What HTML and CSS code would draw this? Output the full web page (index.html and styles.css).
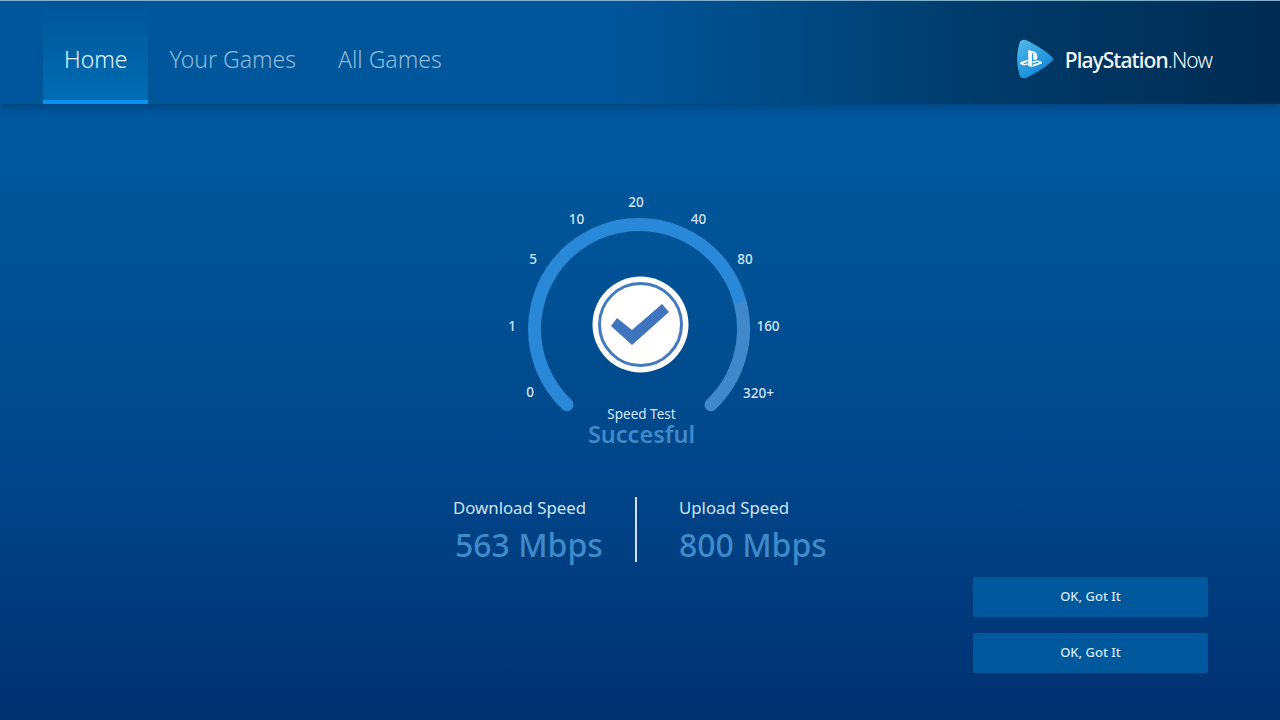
FILE: index.html
```html
<!DOCTYPE html>
<html lang="en">
<head>
<meta charset="utf-8">
<title>PlayStation Now</title>
<link rel="stylesheet" href="styles.css">
</head>
<body>
<div class="page">
  <header class="topbar">
    <nav class="nav">
      <a class="tab active">Home</a>
      <a class="tab">Your Games</a>
      <a class="tab">All Games</a>
    </nav>
    <div class="brand">
      <svg class="brand-icon" viewBox="0 0 38 40" width="38" height="40">
        <defs>
          <linearGradient id="playfill" x1="0" y1="0" x2="0.6" y2="1">
            <stop offset="0" stop-color="#55b9ea"/>
            <stop offset="1" stop-color="#0f88d8"/>
          </linearGradient>
        </defs>
        <path d="M3 6C3.500 1 7 -.5 11 1.500C20 6 30 12 36 18C37.500 19.500 37.500 20.500 36 22C30 28 20 34 11 38.500C7 40.500 3.500 39 3 34C.5 25 .5 15 3 6Z" fill="url(#playfill)"/>
        <g transform="translate(4 8.500) scale(.92)">
          <path fill="#fff" d="M8.985 2.596v17.548l3.915 1.261V6.688c0-.69.304-1.151.794-.991.636.181.76.814.76 1.505v5.876c2.441 1.193 4.362-.002 4.362-3.153 0-3.237-1.126-4.675-4.438-5.827-1.307-.448-3.728-1.186-5.391-1.502zm4.656 16.242l6.296-2.275c.715-.258.826-.625.246-.818-.586-.192-1.637-.139-2.357.123l-4.205 1.499v-2.385l.24-.085s1.201-.42 2.913-.615c1.696-.18 3.785.03 5.437.661 1.848.601 2.04 1.472 1.576 2.072-.465.6-1.622 1.036-1.622 1.036l-8.544 3.107V18.838zM1.807 18.600c-1.900-.545-2.214-1.668-1.352-2.320.801-.586 2.160-1.052 2.160-1.052l5.615-2.013v2.313L4.205 17c-.705.271-.825.632-.239.826.586.195 1.637.15 2.343-.12L8.247 17v2.074c-.12.03-.256.044-.39.073-1.939.331-3.996.196-6.038-.479z"/>
        </g>
      </svg>
      <span class="brand-name">PlayStation<span class="brand-dot">.</span><span class="brand-now">Now</span></span>
    </div>
  </header>
  <main class="content">
    <svg class="gauge" viewBox="0 0 300 280" width="300" height="280">
      <path class="arc-end" d="M250 122A104.500 104.500 0 0 1 221 224.700"/>
      <path class="arc-main" d="M77 224.700A104.500 104.500 0 1 1 250 122"/>
      <circle class="arc-cap" cx="77" cy="224.700" r="6.500"/>
      <g class="ticks">
        <text x="40" y="217">0</text>
        <text x="22" y="151">1</text>
        <text x="43" y="84">5</text>
        <text x="86.500" y="44">10</text>
        <text x="146" y="27">20</text>
        <text x="208.500" y="44">40</text>
        <text x="255" y="84">80</text>
        <text x="278" y="151">160</text>
        <text x="268.500" y="218">320+</text>
      </g>
      <circle cx="150.500" cy="144.500" r="48" fill="#fff"/>
      <circle cx="150.500" cy="144.500" r="41" class="ring"/>
      <path class="check" d="M127 138L142 150L172 124L179 132L142 165L121 146Z"/>
      <text class="speed-title" x="151.500" y="238.500">Speed Test</text>
      <text class="speed-result" x="151.500" y="263">Succesful</text>
    </svg>
    <section class="stats">
      <div class="stat stat-down">
        <div class="stat-label">Download Speed</div>
        <div class="stat-value">563 Mbps</div>
      </div>
      <div class="stat stat-up">
        <div class="stat-label">Upload Speed</div>
        <div class="stat-value">800 Mbps</div>
      </div>
    </section>
    <div class="actions">
      <button class="action">OK, Got It</button>
      <button class="action">OK, Got It</button>
    </div>
  </main>
</div>
</body>
</html>
```
FILE: styles.css
```css
* { box-sizing: border-box; }
html, body { margin: 0; padding: 0; }
body {
  width: 1280px;
  height: 720px;
  overflow: hidden;
  font-family: "Noto Sans", "Open Sans", sans-serif;
}
.page {
  width: 1280px;
  height: 720px;
  background: linear-gradient(180deg, #005a9e 0%, #00589d 20%, #004f92 45%, #004387 70%, #003a7c 85%, #003070 100%);
  display: flex;
  flex-direction: column;
}
.topbar {
  height: 104px;
  flex: none;
  display: flex;
  justify-content: space-between;
  align-items: stretch;
  padding: 0 68px 0 43px;
  border-top: 1px solid #7fb0cf;
  background: linear-gradient(90deg, #00569a 0%, #00569a 48%, #003a68 78%, #002b52 100%);
  box-shadow: 0 3px 10px rgba(0, 30, 70, .4);
  position: relative;
}
.nav { display: flex; align-items: stretch; }
.tab {
  display: flex;
  align-items: center;
  padding: 25px 21px 9px;
  font-size: 23px;
  font-weight: 300;
  color: #8fb9da;
  border-bottom: 4px solid transparent;
}
.tab.active {
  color: #e6f3fb;
  border-bottom-color: #0a90f5;
  background: linear-gradient(180deg, #00569a 5%, #006db2 100%);
}
.brand { display: flex; align-items: center; gap: 11px; padding-top: 24px; padding-bottom: 11px; }
.brand-icon { flex: none; }
.brand-name {
  margin-top: 2px;
  font-size: 21px;
  font-weight: 500;
  color: #f2f8fc;
  letter-spacing: -.9px;
  line-height: 1;
}
.brand-dot { font-weight: 300; color: #9fc4e0; }
.brand-now { font-weight: 300; }
.content {
  flex: 1;
  display: flex;
  flex-direction: column;
  align-items: flex-start;
}
.gauge {
  display: block;
  margin: 76px 0 0 490px;
  flex: none;
}
.arc-main, .arc-end { fill: none; stroke-width: 13; }
.arc-main { stroke: #2a88d8; }
.arc-end { stroke: #3f88c9; stroke-linecap: round; }
.arc-cap { fill: #2a88d8; }
.ticks text {
  font-size: 13.500px;
  font-weight: 500;
  fill: #d2e4f4;
  text-anchor: middle;
}
.ring { fill: none; stroke: #4279c0; stroke-width: 3; }
.check { fill: #3f74bf; }
.speed-title { font-size: 13.500px; fill: #d6e6f4; text-anchor: middle; }
.speed-result { font-size: 23.500px; font-weight: 600; fill: #3f88c9; text-anchor: middle; }
.stats {
  display: flex;
  margin: 37px 0 0 453px;
  height: 65px;
  flex: none;
}
.stat-down { width: 184px; border-right: 2px solid #cfe0f0; }
.stat-up { padding-left: 42px; }
.stat-label {
  font-size: 16.800px;
  line-height: 22px;
  color: #cfe2f3;
}
.stat-value {
  margin-top: 9px;
  font-size: 32px;
  font-weight: 500;
  line-height: 34px;
  color: #3f8aca;
}
.stat-down .stat-value { padding-left: 2px; }
.actions {
  align-self: flex-end;
  margin: 15px 72px 0 0;
  display: flex;
  flex-direction: column;
  gap: 16px;
}
.action {
  width: 235px;
  height: 40px;
  border: 0;
  border-radius: 2px;
  background: #00589c;
  color: #d6e8f6;
  font-family: inherit;
  font-size: 13px;
  font-weight: 500;
  padding: 0 0 2px;
}
```
